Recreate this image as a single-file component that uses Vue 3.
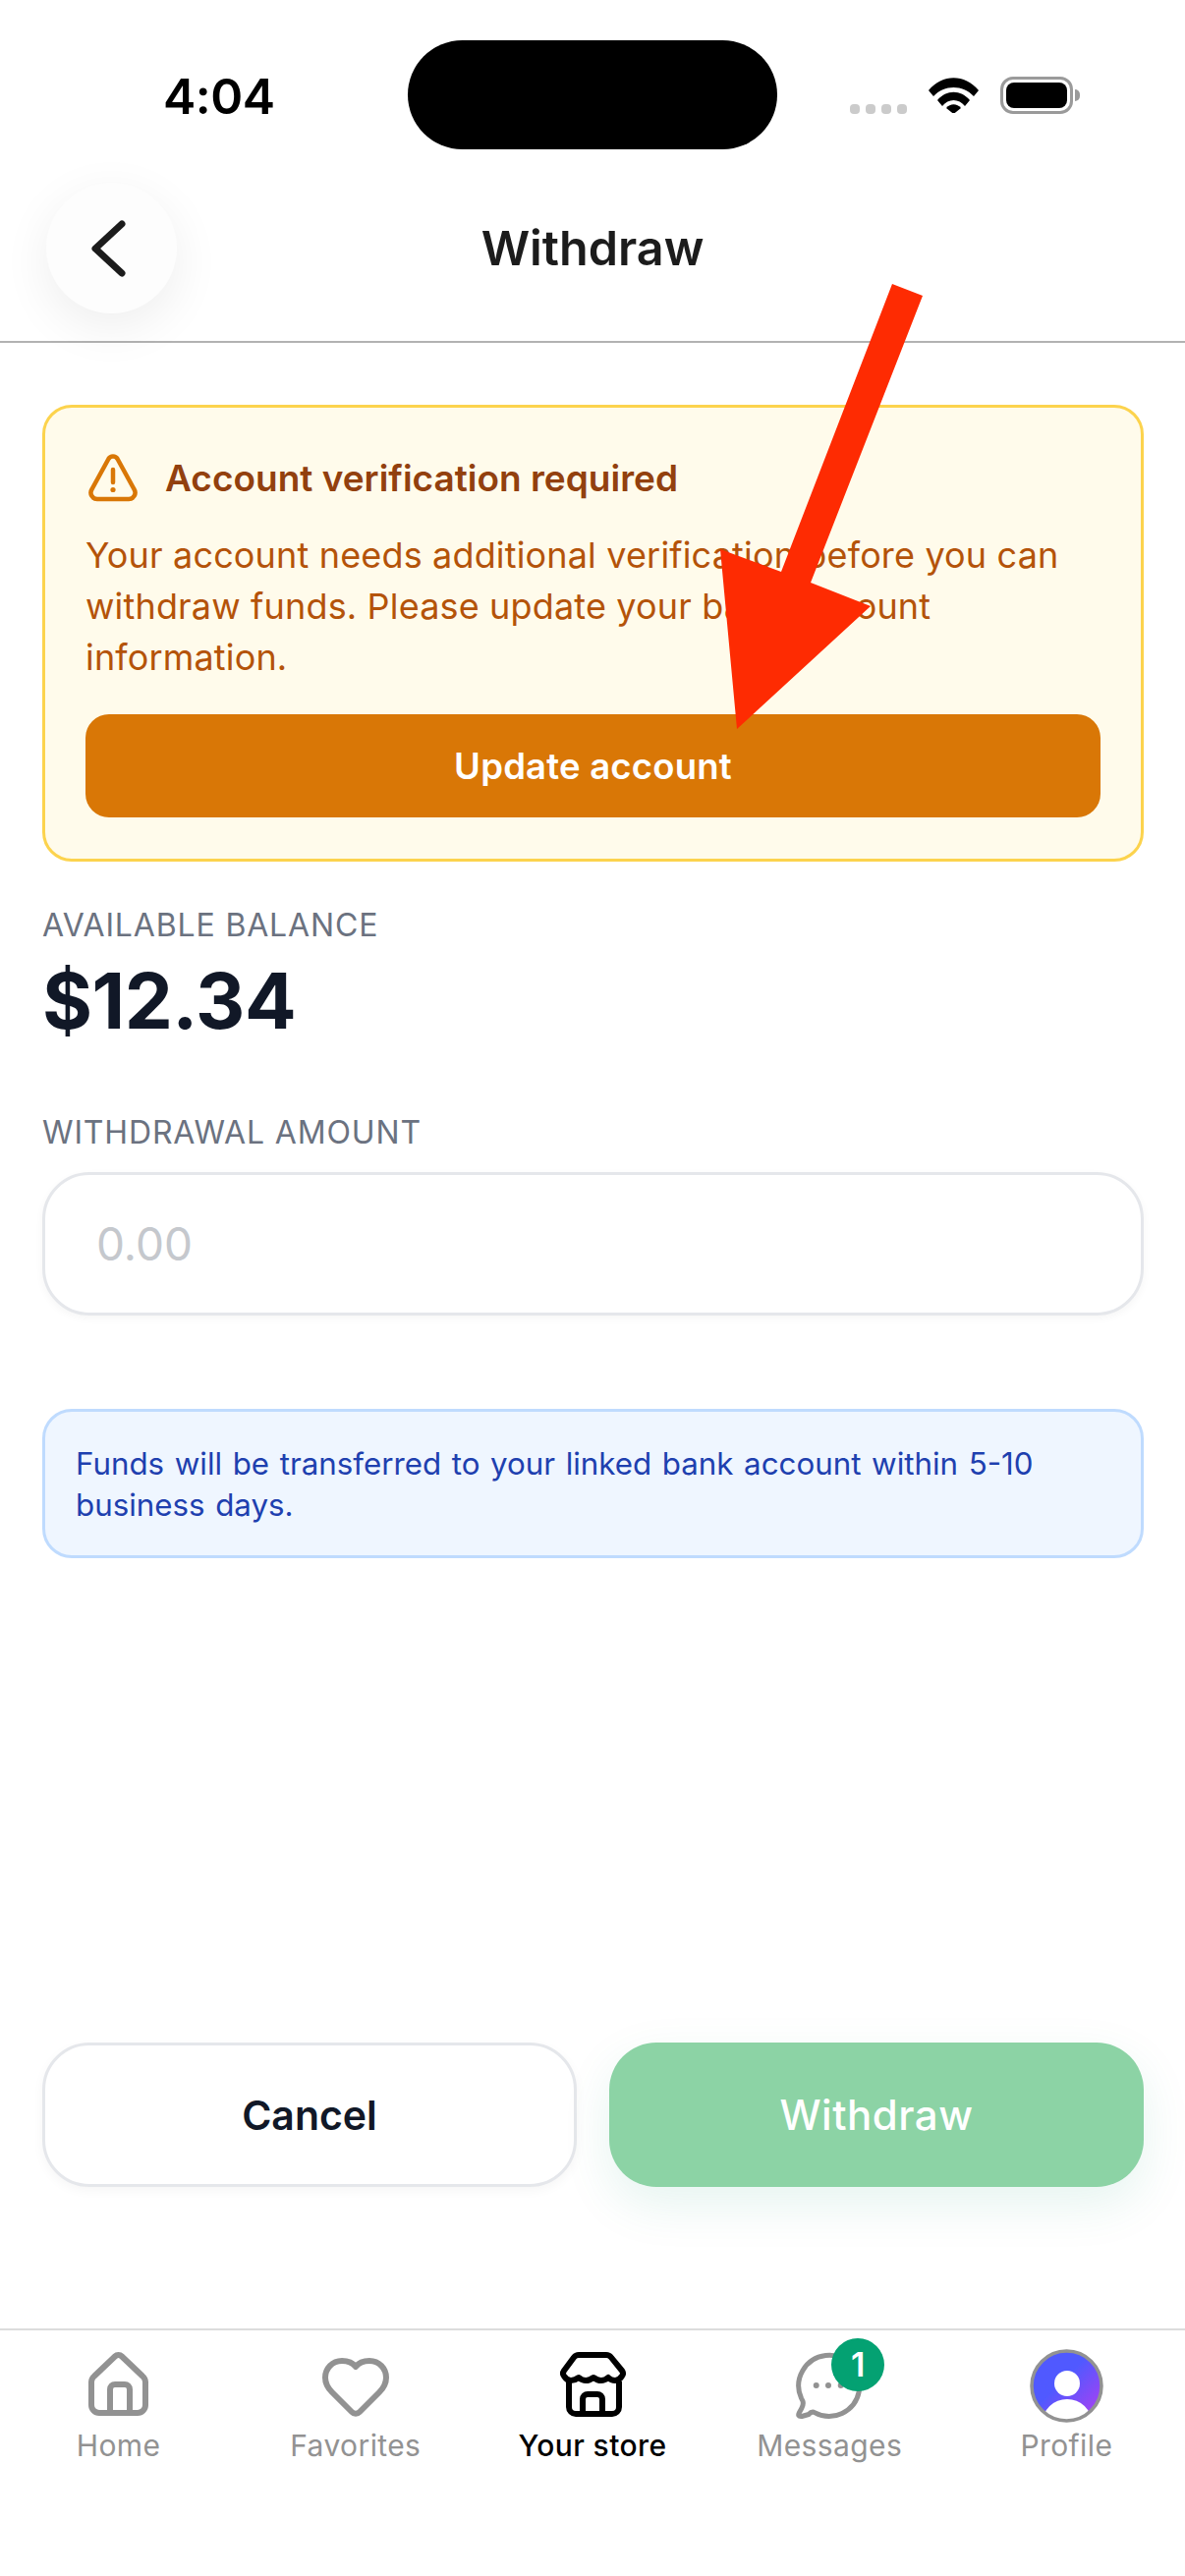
<script setup>
const navItems = [
  { label: 'Home', icon: 'home' },
  { label: 'Favorites', icon: 'heart' },
  { label: 'Your store', icon: 'store', active: true },
  { label: 'Messages', icon: 'chat', badge: 1 },
  { label: 'Profile', icon: 'avatar' }
]
</script>

<template>
  <div class="phone">
    <div class="status">
      <span class="time">4:04</span>
      <div class="island"></div>
      <div class="status-icons">
        <div class="signal"><i></i><i></i><i></i><i></i></div>
        <svg class="wifi" viewBox="0 0 51 36" width="51" height="36">
          <path d="M0 13 C14 -4 37 -4 51 13 L46 19 C35 7 16 7 5 19 Z" fill="#000" />
          <path d="M9 23 C18 12 33 12 42 23 L37 29 C31 21 20 21 14 29 Z" fill="#000" />
          <path d="M18 31 C22 26 29 26 33 31 L25.5 37 Z" fill="#000" />
        </svg>
        <div class="battery"><div class="battery-fill"></div></div>
        <div class="battery-tip"></div>
      </div>
    </div>

    <header class="header">
      <button class="back" type="button" aria-label="Back">
        <svg class="chevron" viewBox="0 0 36 58" width="36" height="58">
          <path d="M32 4 L5 29 L32 54" fill="none" stroke="#1c1c1c" stroke-width="7" stroke-linecap="round" stroke-linejoin="round" />
        </svg>
      </button>
      <h1 class="title">Withdraw</h1>
      <div></div>
    </header>

    <main class="main">
      <section class="alert">
        <div class="alert-head">
          <svg viewBox="0 0 50 50" width="50" height="50">
            <path d="M20.5 6 a5.2 5.2 0 0 1 9 0 L46.500 37 a6.500 6.500 0 0 1 -5.600 10 H9.100 a6.500 6.500 0 0 1 -5.600 -10 Z" fill="none" stroke="#d97706" stroke-width="4.500" stroke-linejoin="round" />
            <path d="M25 17 V30" stroke="#d97706" stroke-width="4.500" stroke-linecap="round" />
            <circle cx="25" cy="37.500" r="2.600" fill="#d97706" />
          </svg>
          <span>Account verification required</span>
        </div>
        <p class="alert-text">Your account needs additional verification before you can withdraw funds. Please update your bank account information.</p>
        <button class="update" type="button">Update account</button>
      </section>

      <div class="label balance-label">AVAILABLE BALANCE</div>
      <div class="balance">$12.34</div>
      <label class="label amount-label" for="amount">WITHDRAWAL AMOUNT</label>
      <input id="amount" class="amount" placeholder="0.00" />
      <div class="info">Funds will be transferred to your linked bank account within 5-10 business days.</div>

      <div class="actions">
        <button class="cancel" type="button">Cancel</button>
        <button class="submit" type="button">Withdraw</button>
      </div>
    </main>

    <nav class="nav">
      <div v-for="item in navItems" :key="item.label" class="nav-item" :class="{ active: item.active }">
        <div class="nav-icon" :class="item.icon">
          <svg v-if="item.icon === 'home'" viewBox="0 0 61 65" width="61" height="65" fill="none" stroke="#929292" stroke-width="6" stroke-linejoin="round">
            <path d="M27 4.500 a5 5 0 0 1 7 0 L55 24.500 a8 8 0 0 1 3 6 V54 a8 8 0 0 1 -8 8 H11 a8 8 0 0 1 -8 -8 V30.500 a8 8 0 0 1 3 -6 Z" />
            <path d="M22 62 V38 a5 5 0 0 1 5 -5 H37 a5 5 0 0 1 5 5 V62" />
          </svg>
          <svg v-else-if="item.icon === 'heart'" viewBox="0 0 68 60" width="68" height="60" fill="none" stroke="#929292" stroke-width="6" stroke-linejoin="round">
            <path d="M34 9 C31 5 26 3 20 3 C10 3 3 11 3 20 C3 27 7 32 10 35 L30 55 a5.500 5.500 0 0 0 8 0 L58 35 C61 32 65 27 65 20 C65 11 58 3 48 3 C42 3 37 5 34 9 Z" />
          </svg>
          <svg v-else-if="item.icon === 'store'" viewBox="0 0 68 66" width="68" height="66" fill="none" stroke="#000" stroke-width="6" stroke-linejoin="round">
            <path d="M20 3 H48 Q51 3 53 5.500 L64 19 Q66 22 64 24.500 Q61 29 57 29 Q53 29 50 26 Q43 32 35 26 Q27 32 20 26 Q16 29 12 29 Q8 29 5 24.500 Q3 22 5 19 L15 5.500 Q17 3 20 3 Z" />
            <path d="M10 30 V56 a7 7 0 0 0 7 7 H54 a7 7 0 0 0 7 -7 V30" />
            <path d="M24 63 V48 a5 5 0 0 1 5 -5 H39 a5 5 0 0 1 5 5 V63" />
          </svg>
          <svg v-else-if="item.icon === 'chat'" viewBox="0 0 70 70" width="70" height="70" fill="none" stroke="#929292" stroke-width="5" stroke-linejoin="round">
            <path d="M20 61.600 A31 31 0 1 0 6.500 47 L8 50 Q9 53 7 57 L4.500 61.500 Q2 66 7 65.500 L14 63.500 Q17 60 20 61.600 Z" />
            <circle cx="21.700" cy="34" r="3" fill="#929292" stroke="none" />
            <circle cx="34" cy="34" r="3" fill="#929292" stroke="none" />
            <circle cx="46.700" cy="34" r="3" fill="#929292" stroke="none" />
          </svg>
          <svg v-else viewBox="0 0 75 75" width="75" height="75">
            <defs>
              <linearGradient id="avatarGrad" x1="0.300" y1="0.200" x2="0.900" y2="0.800">
                <stop offset="0.300" stop-color="#5059ff" />
                <stop offset="1" stop-color="#9b44f4" />
              </linearGradient>
              <clipPath id="avatarClip"><circle cx="37.500" cy="37.500" r="35.500" /></clipPath>
            </defs>
            <circle cx="37.500" cy="37.500" r="35.500" fill="url(#avatarGrad)" />
            <g clip-path="url(#avatarClip)" fill="#fff">
              <circle cx="38" cy="35" r="13" />
              <ellipse cx="38" cy="75" rx="25" ry="24" />
            </g>
            <circle cx="37.500" cy="37.500" r="35.500" fill="none" stroke="#929292" stroke-width="3.500" />
          </svg>
          <span v-if="item.badge" class="badge">{{ item.badge }}</span>
        </div>
        <span class="nav-label">{{ item.label }}</span>
      </div>
    </nav>

    <svg class="arrow" viewBox="0 0 1206 2622" width="1206" height="2622" aria-hidden="true">
      <polygon points="908,289 939,301 825,593 886,617 750,742 733,559 795,582" fill="#fe2b02" />
    </svg>
  </div>
</template>

<style>
html, body { margin: 0; background: #fff; }
</style>

<style scoped>
.phone {
  position: relative;
  width: 1206px;
  height: 2622px;
  display: flex;
  flex-direction: column;
  background: #fff;
  font-family: Inter, "Liberation Sans", sans-serif;
  overflow: hidden;
}
.status {
  height: 186px;
  box-sizing: border-box;
  padding-top: 41px;
  display: flex;
  align-items: flex-start;
  flex: none;
}
.time {
  width: 110px;
  margin: 27px 0 0 166px;
  font-size: 50px;
  line-height: 60px;
  font-weight: 600;
  color: #000;
  letter-spacing: -0.5px;
}
.island {
  width: 376px;
  height: 111px;
  margin-left: 139px;
  border-radius: 56px;
  background: #000;
}
.status-icons {
  display: flex;
  align-items: center;
  margin: 37px 0 0 74px;
}
.signal { display: flex; gap: 6px; margin-top: 28px; }
.signal i { width: 10px; height: 10px; border-radius: 4px; background: #cbcbcb; }
.wifi { margin-left: 22px; }
.battery {
  width: 74px;
  height: 38px;
  box-sizing: border-box;
  margin-left: 22px;
  padding: 3px;
  border: 3px solid #9a9a9a;
  border-radius: 13px;
}
.battery-fill { height: 100%; border-radius: 8px; background: #000; }
.battery-tip {
  width: 5px;
  height: 12px;
  margin-left: 2px;
  background: #9a9a9a;
  border-radius: 0 6px 6px 0;
}
.header {
  height: 163px;
  box-sizing: border-box;
  flex: none;
  display: grid;
  grid-template-columns: 133px 1fr 133px;
  padding: 0 47px;
  border-bottom: 2px solid #b2b2b2;
}
.back {
  width: 133px;
  height: 133px;
  padding: 0;
  border: none;
  border-radius: 50%;
  background: #fdfdfd;
  box-shadow: 0 14px 50px rgba(0, 0, 0, 0.07);
  display: flex;
  align-items: center;
  justify-content: center;
}
.chevron { margin-right: 7px; }
.title {
  margin: 0;
  height: 133px;
  line-height: 133px;
  text-align: center;
  font-size: 48.500px;
  font-weight: 600;
  color: #1c1c1c;
}
.main {
  flex: 1;
  min-height: 0;
  display: flex;
  flex-direction: column;
  padding: 63px 42px 0 43px;
}
.alert {
  height: 465px;
  box-sizing: border-box;
  flex: none;
  padding: 38px 41px 0 41px;
  background: #fffbeb;
  border: 3px solid #fcd34d;
  border-radius: 30px;
}
.alert-head {
  height: 66px;
  display: flex;
  align-items: center;
  gap: 28px;
  padding-left: 3px;
  font-size: 37px;
  font-weight: 600;
  color: #92400e;
}
.alert-text {
  margin: 20px 0 0;
  font-size: 36px;
  line-height: 52px;
  letter-spacing: 0.160px;
  color: #b45309;
}
.update {
  display: block;
  width: 100%;
  height: 105px;
  margin-top: 32px;
  border: none;
  border-radius: 24px;
  background: #d97706;
  color: #fff;
  font: 600 36.500px Inter, sans-serif;
  letter-spacing: 0.200px;
}
.label {
  display: block;
  font-size: 32px;
  line-height: 36px;
  letter-spacing: 0.850px;
  color: #6b7280;
}
.balance-label { margin-top: 47px; }
.balance {
  margin-top: 13px;
  font-size: 78px;
  line-height: 92px;
  font-weight: 700;
  letter-spacing: -0.500px;
  color: #111827;
}
.amount-label { margin-top: 70px; }
.amount {
  height: 146px;
  box-sizing: border-box;
  flex: none;
  margin-top: 22px;
  padding: 0 52px;
  border: 3px solid #e5e7eb;
  border-radius: 48px;
  background: #fff;
  box-shadow: 0 3px 8px rgba(0, 0, 0, 0.04);
  font: 400 46px Inter, sans-serif;
  outline: none;
}
.amount::placeholder { color: #c5c8cd; opacity: 1; }
.info {
  height: 152px;
  box-sizing: border-box;
  flex: none;
  margin-top: 95px;
  padding: 32px 40px 0 31px;
  background: #eff6ff;
  border: 3px solid #bfdbfe;
  border-radius: 30px;
  font-size: 31.300px;
  line-height: 42px;
  word-spacing: 1.800px;
  color: #1e40af;
}
.actions {
  display: grid;
  grid-template-columns: 1fr 1fr;
  gap: 33px;
  margin-top: 493px;
}
.actions button {
  height: 147px;
  padding: 0;
  border-radius: 48px;
}
.cancel {
  background: #fff;
  border: 3px solid #e5e7eb;
  color: #111827;
  font: 600 41px Inter, sans-serif;
  box-shadow: 0 4px 12px rgba(0, 0, 0, 0.04);
}
.submit {
  background: #8cd3a5;
  border: none;
  color: #fff;
  font: 500 42px Inter, sans-serif;
  letter-spacing: 0.500px;
  box-shadow: 0 18px 50px rgba(5, 150, 105, 0.1);
}
.nav {
  height: 252px;
  box-sizing: border-box;
  flex: none;
  display: grid;
  grid-template-columns: repeat(5, 1fr);
  border-top: 2px solid #dcdcdc;
}
.nav-item {
  display: flex;
  flex-direction: column;
  align-items: center;
  color: #929292;
}
.nav-item.active { color: #000; }
.nav-icon {
  position: relative;
  height: 77px;
  margin-top: 18px;
  display: flex;
  align-items: flex-start;
  padding-top: 4px;
  box-sizing: border-box;
}
.nav-icon.heart { padding-top: 10px; }
.nav-icon.avatar { padding-top: 1px; }
.nav-label {
  margin-top: 4px;
  font-size: 30px;
  line-height: 36px;
  letter-spacing: 0.400px;
}
.active .nav-label { font-weight: 500; }
.badge {
  position: absolute;
  left: 37px;
  top: -10px;
  width: 54px;
  height: 54px;
  border-radius: 50%;
  background: #04a172;
  color: #fff;
  font-size: 34px;
  font-weight: 600;
  line-height: 54px;
  text-align: center;
}
.arrow {
  position: absolute;
  left: 0;
  top: 0;
  pointer-events: none;
}
</style>
